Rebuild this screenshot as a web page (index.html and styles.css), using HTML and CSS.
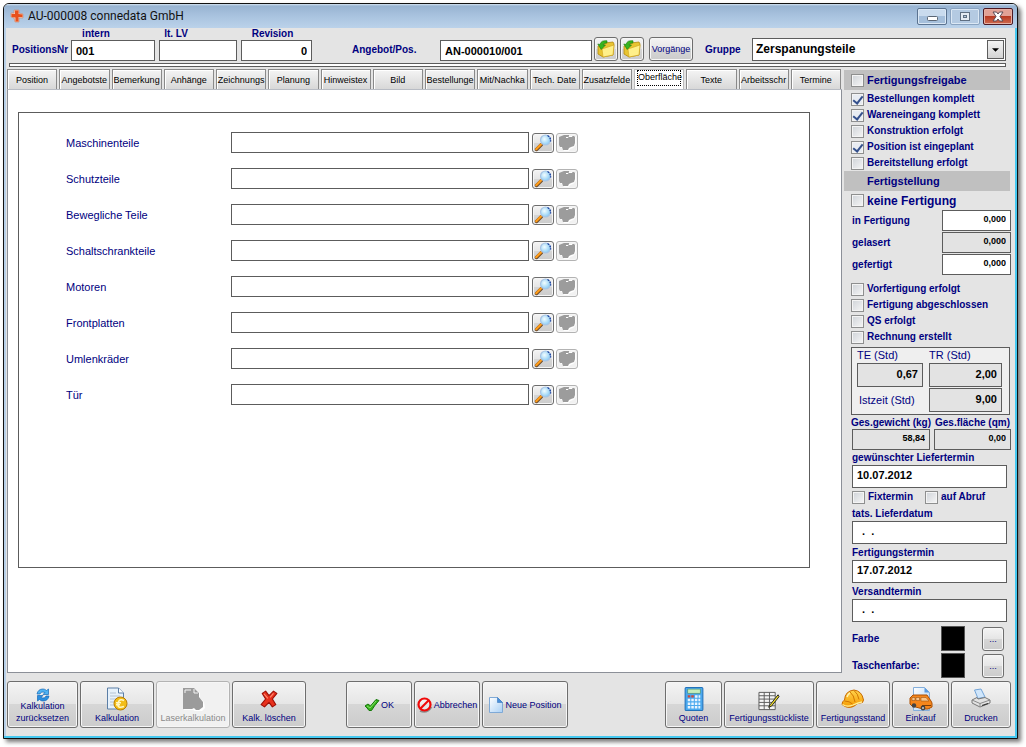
FILE: index.html
```html
<!DOCTYPE html>
<html lang="de">
<head>
<meta charset="utf-8">
<title>AU-000008 connedata GmbH</title>
<link rel="stylesheet" href="styles.css">
</head>
<body>
<svg class="defs" aria-hidden="true">
  <defs>
    <linearGradient id="g-page" x1="0" y1="0" x2="1" y2="1"><stop offset="0" stop-color="#ffffff"/><stop offset="1" stop-color="#a9d0f5"/></linearGradient>
    <linearGradient id="g-orange" x1="0" y1="0" x2="0" y2="1"><stop offset="0" stop-color="#ffd34d"/><stop offset="1" stop-color="#f59a00"/></linearGradient>
    <radialGradient id="g-lens" cx=".4" cy=".4" r=".6"><stop offset="0" stop-color="#f2fdff"/><stop offset="1" stop-color="#8ccdf5"/></radialGradient>
    <symbol id="i-lens" viewBox="0 0 18 18">
      <path d="M2.500 15.500l5-5" stroke="#6b4a2a" stroke-width="3.400" stroke-linecap="round"/>
      <path d="M2.200 15.200l4.800-4.800" stroke="#ff9c1a" stroke-width="2.200" stroke-linecap="round"/>
      <circle cx="11.500" cy="6" r="5" fill="url(#g-lens)" stroke="#a9c4e4" stroke-width="1.200"/>
      <path d="M13.500 1.500q3.600 2 3 6" fill="none" stroke="#123a9c" stroke-width="1.300" stroke-dasharray="2 1"/>
    </symbol>
    <symbol id="i-blob" viewBox="0 0 18 18">
      <path d="M2 4l7-1h9v8l-3 3-3 1-1 2H6l-2-3-2-1z" fill="#fff"/>
      <path d="M1 3l5-2h5v1h5l1 1v6l-1 3-3 1-2 1-1 2H5l-1-3H2L1 11z" fill="#9c9c9c"/>
      <path d="M8 3.500h2l1-1h3v-1" stroke="#fff" fill="none"/>
    </symbol>
    <symbol id="i-folder" viewBox="0 0 18 18">
      <path d="M1 6l6-1 1-2 8-1 1 2-1 11-10 2-5-3z" fill="#e8c431" stroke="#b58a0a" stroke-width=".8"/>
      <path d="M5 9l12-4-1 10-10 2z" fill="#fff08a" stroke="#d0a319" stroke-width=".6"/>
      <path d="M10 .8Q4 0 3 4.500L.8 4l3.400 5.500L8.500 5 6 5q.8-2.500 4-2z" fill="#37b51e" stroke="#187a0a" stroke-width=".6"/>
    </symbol>
    <symbol id="i-refresh" viewBox="0 0 14 14">
      <path d="M1 6Q2 1 7 1q2 0 3.500 1.500L12.500 1v5.500H7L9 4.500Q5 3 4 6z" fill="#4db2f2" stroke="#1668b8" stroke-width=".7"/>
      <path d="M13 8q-1 5-6 5-2 0-3.500-1.500L1.500 13V7.500H7l-2 2Q9 11 10 8z" fill="#2a8fe0" stroke="#1668b8" stroke-width=".7"/>
    </symbol>
    <symbol id="i-calc-doc" viewBox="0 0 22 24">
      <path d="M1.500 1h11l5 5v16h-16z" fill="#e6f1fb" stroke="#5b7ea6"/>
      <path d="M12.500 1v5h5" fill="#fff" stroke="#5b7ea6"/>
      <path d="M4 6h6M4 9h10M4 12h6M4 15h4M4 18h4" stroke="#b5c3d4"/>
      <circle cx="14.500" cy="16.500" r="6.500" fill="#f2bd18" stroke="#b97c00"/>
      <path d="M18 13.500q-5-2.500-6 3t6 3M10 15.800h5M10 17.800h4" fill="none" stroke="#fff7c2" stroke-width="1.500"/>
    </symbol>
    <symbol id="i-calc-gray" viewBox="0 0 22 24">
      <path d="M2 2h11l5 4v5l4 4 1 6-4 4-6-1-2-1H2z" fill="#fff"/>
      <path d="M1 1h11l5 5v4l4 5v5l-4 3h-3l-2-2-2 1H1z" fill="#9b9b9b"/>
      <path d="M3 3h6M12 2v4h4M3 3v3" fill="none" stroke="#f5f5f5"/>
    </symbol>
    <symbol id="i-x" viewBox="0 0 16 16">
      <path d="M2 3l3-2 3 4 4-4 3 2-4 5 3 5-3 2-3-4-4 4-3-2 4-5z" fill="#e8301c" stroke="#9c1006" stroke-linejoin="round"/>
      <path d="M3.500 3.500l3.500 4M12 3L9 6.500" stroke="#ff8a70"/>
    </symbol>
    <symbol id="i-check" viewBox="0 0 16 14">
      <path d="M1 8l3-2 2.500 2L12 1.500l3 1Q10 8 7.500 12.500H5Q3 9.500 1 8z" fill="#38b31c" stroke="#14780a" stroke-linejoin="round"/>
      <path d="M3 8l3 2 6-7" fill="none" stroke="#86e06c"/>
    </symbol>
    <symbol id="i-ban" viewBox="0 0 16 16">
      <path d="M3 14q7 3 11.500-4" fill="none" stroke="#8c8c8c" stroke-width="1.800"/>
      <circle cx="7.500" cy="7.500" r="6" fill="#fff" fill-opacity=".4" stroke="#f00a0a" stroke-width="2.200"/>
      <path d="M11.500 3.500l-8 8" stroke="#f00a0a" stroke-width="2.200"/>
    </symbol>
    <symbol id="i-page" viewBox="0 0 14 16">
      <path d="M.5.5h8l5 5v10H.5z" fill="url(#g-page)" stroke="#7fa9d6"/>
      <path d="M8.500.5v5h5z" fill="#4a90d9" stroke="#3a78bd" stroke-width=".6"/>
    </symbol>
    <symbol id="i-calculator" viewBox="0 0 18 23">
      <rect x=".5" y=".5" width="17" height="22" rx="1" fill="#4aa8ee" stroke="#2272ba"/>
      <rect x="3" y="2" width="12" height="4" fill="#c5eebc" stroke="#4b8f6b" stroke-width=".6"/>
      <path d="M3 9h6" stroke="#d04a3a" stroke-width="2.200" stroke-dasharray="2.400 1"/>
      <path d="M10 9h5M3 12.500h12M3 16h12M3 19.500h12" stroke="#eaf5ff" stroke-width="2.400" stroke-dasharray="2.400 1"/>
    </symbol>
    <symbol id="i-grid" viewBox="0 0 23 21">
      <path d="M1 1.500h17v18H1zM1 5h17M1 8.500h17M1 12h17M1 15.500h17M6.500 1.500v18M12 1.500v18" fill="#f4f4f4" stroke="#5b5b5b"/>
      <path d="M21 4l-8 10-2 3 3-1 8-10z" fill="#f3e12a" stroke="#222"/>
    </symbol>
    <symbol id="i-helmet" viewBox="0 0 24 20">
      <path d="M3.500 11Q4 2 13 1q8 1 9.500 10l-1 2.500q-5 0-9 4Q6 20 1 15.500q0-3 2.500-4.500z" fill="url(#g-orange)" stroke="#c96b00"/>
      <path d="M1.500 15.500Q6 18.500 12 16t9-3" fill="none" stroke="#fff09a" stroke-width="1.300"/>
      <path d="M3.500 12q5 0 8 3M9 3q4 3 5 10M13 1.500q4 3 5 9" fill="none" stroke="#d27600"/>
      <path d="M6 8q1-3 3-4" stroke="#fff2b0" stroke-width="1.500" fill="none"/>
    </symbol>
    <symbol id="i-van" viewBox="0 0 24 24">
      <path d="M4.500.5h11l5 5v18h-16z" fill="url(#g-page)" stroke="#84aedb"/>
      <path d="M15.500.5v5h5z" fill="#5b9be0"/>
      <path d="M1 11l3-3h14l4 6 1 2v4l-4 2h-5L3 19l-2-2z" fill="#f5861c" stroke="#ab5005"/>
      <path d="M3 10.500h3v3H3zM7 10.500h3.500v3H7zM12 10.500h5l3 3.500h-8z" fill="#f9c58b" stroke="#8a4a10" stroke-width=".5"/>
      <path d="M13 18.500h9" stroke="#7a3c08"/>
      <circle cx="5" cy="18.500" r="2.200" fill="#444"/><circle cx="14" cy="21" r="2.400" fill="#444"/><circle cx="14" cy="21" r="1" fill="#ccc"/>
    </symbol>
    <symbol id="i-printer" viewBox="0 0 20 19">
      <path d="M3.500 1.500l6.500-1L14 8.500l-7 1.500z" fill="#d0e6fb" stroke="#72a4d8"/>
      <path d="M1 11.500L6 9l1 1.500 7-1.500 5 2.500v3L9 18.500 1 14.500z" fill="#e2e2e2" stroke="#777"/>
      <path d="M1 11.500l8 3.500 10-3.500M9 15v3" fill="none" stroke="#8a8a8a"/>
      <path d="M11 17l6-2" stroke="#333" stroke-width="1.300"/>
    </symbol>
  </defs>
</svg>

<div class="window">
  <header class="titlebar">
    <svg class="logo" viewBox="0 0 14 14"><path d="M4 1h5v3l4 1v4H9v4H5l-1-4-3-1V4h3z" fill="#f3c5b2" stroke="#c98a70" stroke-width=".6"/><path d="M5 1.500h3.500V5l4 .5V8H8.500v4.500H5.500V8.500L1.500 8V5H5z" fill="#e8501c"/></svg>
    <h1 class="title">AU-000008 connedata GmbH</h1>
    <div class="caption-buttons">
      <button class="cap" aria-label="Minimieren"><svg viewBox="0 0 28 15"><rect x="9.500" y="7.500" width="10" height="4" rx="1" fill="#fff" stroke="#5a6675"/></svg></button>
      <button class="cap cap-dim" aria-label="Maximieren"><svg viewBox="0 0 28 15"><rect x="9.500" y="3.500" width="9" height="8" fill="#e4ebf3" stroke="#5f6f82"/><rect x="12.500" y="6.500" width="3" height="2" fill="#b5c8dd" stroke="#5f6f82"/></svg></button>
      <button class="cap cap-close" aria-label="Schließen"><svg viewBox="0 0 28 15"><path d="M9 3h3.500L14 5l1.500-2H19l-3 4.500 3 4.500h-3.500L14 10l-1.500 2H9l3-4.500z" fill="#fff" stroke="#5a4a55"/></svg></button>
    </div>
  </header>

  <div class="content">
    <section class="head">
      <label class="lbl head-lbl lbl-pos" for="posnr">PositionsNr</label>
      <div class="stack w-intern"><label class="lbl" for="posnr">intern</label><input id="posnr" class="field" value="001"></div>
      <div class="stack w-lv"><label class="lbl" for="lv">lt. LV</label><input id="lv" class="field"></div>
      <div class="stack w-rev"><label class="lbl" for="rev">Revision</label><input id="rev" class="field num" value="0"></div>
      <label class="lbl head-lbl lbl-offer" for="offer">Angebot/Pos.</label>
      <input id="offer" class="field w-offer" value="AN-000010/001">
      <div class="head-buttons">
        <button class="btn btn-folder" aria-label="Angebot öffnen"><svg class="s18"><use href="#i-folder"/></svg></button>
        <button class="btn btn-folder" aria-label="Position öffnen"><svg class="s18"><use href="#i-folder"/></svg></button>
        <button class="btn btn-cases">Vorgänge</button>
      </div>
      <label class="lbl head-lbl lbl-group" for="group">Gruppe</label>
      <div class="combo">
        <select id="group" class="select"><option>Zerspanungsteile</option></select>
        <span class="arrow"><svg viewBox="0 0 8 4"><path d="M0 0h8L4 4z"/></svg></span>
      </div>
    </section>
    <div class="rule"></div>

    <div class="main">
      <div class="work">
        <nav class="tabs">
          <button class="tab">Position</button><button class="tab">Angebotste</button><button class="tab">Bemerkung</button><button class="tab">Anhänge</button><button class="tab">Zeichnungs</button><button class="tab">Planung</button><button class="tab">Hinweistex</button><button class="tab">Bild</button><button class="tab">Bestellunge</button><button class="tab">Mit/Nachka</button><button class="tab">Tech. Date</button><button class="tab">Zusatzfelde</button><button class="tab active"><span>Oberfläche</span></button><button class="tab">Texte</button><button class="tab">Arbeitsschr</button><button class="tab">Termine</button>
        </nav>
        <div class="panel">
          <div class="frame">
            <div class="row"><label for="f1">Maschinenteile</label><input id="f1" class="field"><button class="btn mini" aria-label="Suchen"><svg class="s18"><use href="#i-lens"/></svg></button><button class="btn mini off" disabled aria-label="Entfernen"><svg class="s18"><use href="#i-blob"/></svg></button></div>
            <div class="row"><label for="f2">Schutzteile</label><input id="f2" class="field"><button class="btn mini" aria-label="Suchen"><svg class="s18"><use href="#i-lens"/></svg></button><button class="btn mini off" disabled aria-label="Entfernen"><svg class="s18"><use href="#i-blob"/></svg></button></div>
            <div class="row"><label for="f3">Bewegliche Teile</label><input id="f3" class="field"><button class="btn mini" aria-label="Suchen"><svg class="s18"><use href="#i-lens"/></svg></button><button class="btn mini off" disabled aria-label="Entfernen"><svg class="s18"><use href="#i-blob"/></svg></button></div>
            <div class="row"><label for="f4">Schaltschrankteile</label><input id="f4" class="field"><button class="btn mini" aria-label="Suchen"><svg class="s18"><use href="#i-lens"/></svg></button><button class="btn mini off" disabled aria-label="Entfernen"><svg class="s18"><use href="#i-blob"/></svg></button></div>
            <div class="row"><label for="f5">Motoren</label><input id="f5" class="field"><button class="btn mini" aria-label="Suchen"><svg class="s18"><use href="#i-lens"/></svg></button><button class="btn mini off" disabled aria-label="Entfernen"><svg class="s18"><use href="#i-blob"/></svg></button></div>
            <div class="row"><label for="f6">Frontplatten</label><input id="f6" class="field"><button class="btn mini" aria-label="Suchen"><svg class="s18"><use href="#i-lens"/></svg></button><button class="btn mini off" disabled aria-label="Entfernen"><svg class="s18"><use href="#i-blob"/></svg></button></div>
            <div class="row"><label for="f7">Umlenkräder</label><input id="f7" class="field"><button class="btn mini" aria-label="Suchen"><svg class="s18"><use href="#i-lens"/></svg></button><button class="btn mini off" disabled aria-label="Entfernen"><svg class="s18"><use href="#i-blob"/></svg></button></div>
            <div class="row"><label for="f8">Tür</label><input id="f8" class="field"><button class="btn mini" aria-label="Suchen"><svg class="s18"><use href="#i-lens"/></svg></button><button class="btn mini off" disabled aria-label="Entfernen"><svg class="s18"><use href="#i-blob"/></svg></button></div>
          </div>
        </div>
      </div>

      <aside class="side">
        <label class="check band"><input type="checkbox">Fertigungsfreigabe</label>
        <div class="checks">
          <label class="check"><input type="checkbox" checked>Bestellungen komplett</label>
          <label class="check"><input type="checkbox" checked>Wareneingang komplett</label>
          <label class="check"><input type="checkbox">Konstruktion erfolgt</label>
          <label class="check"><input type="checkbox" checked>Position ist eingeplant</label>
          <label class="check"><input type="checkbox">Bereitstellung erfolgt</label>
        </div>
        <h2 class="band band-text">Fertigstellung</h2>
        <label class="check big"><input type="checkbox">keine Fertigung</label>
        <div class="amounts">
          <label class="lbl" for="a1">in Fertigung</label><input id="a1" class="field num small" value="0,000">
          <label class="lbl" for="a2">gelasert</label><input id="a2" class="field num small ro" value="0,000" readonly>
          <label class="lbl" for="a3">gefertigt</label><input id="a3" class="field num small" value="0,000">
        </div>
        <div class="checks">
          <label class="check"><input type="checkbox">Vorfertigung erfolgt</label>
          <label class="check"><input type="checkbox">Fertigung abgeschlossen</label>
          <label class="check"><input type="checkbox">QS erfolgt</label>
          <label class="check"><input type="checkbox">Rechnung erstellt</label>
        </div>
        <div class="times">
          <label for="te">TE (Std)</label><label for="tr">TR (Std)</label>
          <input id="te" class="field num ro" value="0,67" readonly><input id="tr" class="field num ro" value="2,00" readonly>
          <label class="ist" for="ist">Istzeit (Std)</label><input id="ist" class="field num ro" value="9,00" readonly>
        </div>
        <div class="totals">
          <label class="lbl" for="kg">Ges.gewicht (kg)</label><label class="lbl" for="qm">Ges.fläche (qm)</label>
          <input id="kg" class="field num small ro" value="58,84" readonly><input id="qm" class="field num small ro" value="0,00" readonly>
        </div>
        <div class="date"><label class="lbl" for="d1">gewünschter Liefertermin</label><input id="d1" class="field" value="10.07.2012"></div>
        <div class="pair"><label class="check"><input type="checkbox">Fixtermin</label><label class="check"><input type="checkbox">auf Abruf</label></div>
        <div class="date"><label class="lbl" for="d2">tats. Lieferdatum</label><input id="d2" class="field blank" value=".  ."></div>
        <div class="date"><label class="lbl" for="d3">Fertigungstermin</label><input id="d3" class="field" value="17.07.2012"></div>
        <div class="date"><label class="lbl" for="d4">Versandtermin</label><input id="d4" class="field blank" value=".  ."></div>
        <div class="colors">
          <span class="lbl">Farbe</span><span class="swatch"></span><button class="btn dots" aria-label="Farbe wählen">...</button>
          <span class="lbl">Taschenfarbe:</span><span class="swatch"></span><button class="btn dots" aria-label="Taschenfarbe wählen">...</button>
        </div>
      </aside>
    </div>

    <footer class="bar">
      <div class="group">
        <button class="btn tool w71"><svg class="ic14"><use href="#i-refresh"/></svg>Kalkulation<br>zurücksetzen</button>
        <button class="btn tool w74"><svg class="ic24"><use href="#i-calc-doc"/></svg>Kalkulation</button>
        <button class="btn tool w74 off" disabled><svg class="ic24"><use href="#i-calc-gray"/></svg>Laserkalkulation</button>
        <button class="btn tool w74"><svg class="ic18"><use href="#i-x"/></svg>Kalk. löschen</button>
      </div>
      <div class="group">
        <button class="btn side-ic w66"><svg class="ic16"><use href="#i-check"/></svg>OK</button>
        <button class="btn side-ic w66"><svg class="ic16"><use href="#i-ban"/></svg>Abbrechen</button>
        <button class="btn side-ic w86"><svg class="ic16"><use href="#i-page"/></svg>Neue Position</button>
      </div>
      <div class="group last">
        <button class="btn tool w57"><svg class="ic24"><use href="#i-calculator"/></svg>Quoten</button>
        <button class="btn tool w90"><svg class="ic22"><use href="#i-grid"/></svg>Fertigungsstückliste</button>
        <button class="btn tool w74"><svg class="ic24"><use href="#i-helmet"/></svg>Fertigungsstand</button>
        <button class="btn tool w57"><svg class="ic24"><use href="#i-van"/></svg>Einkauf</button>
        <button class="btn tool w60"><svg class="ic20"><use href="#i-printer"/></svg>Drucken</button>
      </div>
    </footer>
  </div>
</div>
</body>
</html>
```
FILE: styles.css
```css
* { box-sizing: border-box; }

body {
  margin: 0;
  min-height: 100vh;
  display: flex;
  padding: 3px 8px 8px 3px;
  background: #fff;
  color: #000080;
  font: 11px/14px "Liberation Sans", Arial, sans-serif;
}

button, input, select { font-family: inherit; margin: 0; }

.defs { position: absolute; width: 0; height: 0; }

.window {
  flex: 1;
  display: flex;
  flex-direction: column;
  border: 1px solid #111;
  border-radius: 6px 6px 0 0;
  overflow: hidden;
  background: #e4e4e4;
  box-shadow: 3px 3px 4px #777, inset -2px -2px 0 #45c8f0, inset 2px 0 0 #b8d0e8;
}

.titlebar {
  display: flex;
  align-items: center;
  height: 24px;
  padding: 0 4px 0 6px;
  background: linear-gradient(#d5e3f2 0, #98b4d2 2px, #a9c3df 12px, #bbd2ea 24px);
}
.logo { width: 14px; height: 14px; margin-right: 4px; }
.title { flex: 1; margin: 0; color: #111; font: 12px/20px Roboto, "Noto Sans", sans-serif; }
.caption-buttons { display: flex; gap: 3px; }
.cap {
  width: 30px; height: 17px; padding: 0;
  border: 1px solid #5b7390; border-radius: 2px;
  background: linear-gradient(#c9dbee 50%, #a5bfdb 50%);
  box-shadow: inset 0 0 0 1px #dbe8f5;
}
.cap svg { display: block; width: 28px; height: 15px; }
.cap-dim { border-color: #8aa3c0; background: #b4cae2; }
.cap-close { border-color: #4d1a24; background: linear-gradient(#e2a195 50%, #b83a22 50%, #cf6b50); box-shadow: inset 0 0 0 1px #e6b0a4; }

.content { flex: 1; display: flex; flex-direction: column; padding: 0 6px 10px 3px; }

.lbl { color: #000080; font-weight: bold; font-size: 10px; line-height: 12px; white-space: nowrap; }

.field {
  width: 100%; min-width: 0; height: 21px; padding: 0 4px;
  border: 1px solid #5c5c5c; border-radius: 0; outline: 0;
  background: #fff; color: #000; font-weight: bold; font-size: 11px;
}
.num { text-align: right; }
.ro { background: #e3e3e3; }
.small { font-size: 9px; padding-bottom: 3px; }

.btn {
  display: flex; align-items: center; justify-content: center;
  padding: 0; border: 1px solid #6e6e6e; border-radius: 3px;
  background: linear-gradient(#f4f4f4, #e6e6e6 48%, #d6d6d6 50%, #cccccc);
  box-shadow: inset 0 0 0 1px #f6f6f6;
  color: #000080; font-size: 9px; line-height: 12px; white-space: nowrap;
}
.btn svg { flex: none; }
.off { border-color: #b3b3b3; background: #f1f1f1; color: #8a8a8a; }
.s18 { width: 18px; height: 18px; }

.head { display: flex; align-items: flex-end; height: 33px; padding: 0 5px 0 5px; }
.head-lbl { height: 17px; }
.lbl-pos { width: 59px; }
.lbl-offer { width: 88px; margin-left: 40px; }
.lbl-group { width: 47px; margin-left: 12px; }
.stack { display: flex; flex-direction: column; align-items: center; margin-right: 4px; }
.stack.w-intern .lbl { padding-right: 34px; }
.stack.w-lv .lbl { padding-right: 44px; }
.stack.w-rev .lbl { padding-right: 8px; }
.w-intern { width: 84px; }
.w-lv { width: 78px; }
.w-rev { width: 71px; margin-right: 0; }
.w-offer { width: 152px; flex: none; }
.head-buttons { display: flex; gap: 2px; margin-left: 2px; }
.btn-folder { width: 24px; height: 24px; }
.btn-cases { width: 44px; height: 24px; margin-left: 3px; }
.combo { flex: 1; display: grid; height: 23px; border: 1px solid #5c5c5c; background: #fff; }
.combo > * { grid-area: 1 / 1; }
.select { appearance: none; width: 100%; border: 0; padding: 0 20px 2px 3px; background: transparent; color: #000; font-weight: bold; font-size: 12px; }
.arrow {
  justify-self: end; display: flex; align-items: center; justify-content: center;
  width: 17px; margin: 1px; border: 1px solid #5c5c5c; background: linear-gradient(#f3f3f3, #d4d4d4); pointer-events: none;
}
.arrow svg { width: 7px; height: 4px; }

.rule { height: 4px; margin: 2px 5px 0 2px; border: 1px solid #5c5c5c; background: #fff; }

.main { flex: 1; display: flex; gap: 2px; padding-top: 2px; }
.work { flex: 1; min-width: 0; display: flex; flex-direction: column; margin-bottom: 7px; }
.tabs { display: flex; gap: 2px; height: 20px; padding-right: 1px; }
.tab {
  flex: 1 1 0; min-width: 0; overflow: hidden; padding: 0; white-space: nowrap;
  border: 1px solid #8a8a8a; border-bottom: 0;
  background: linear-gradient(#f4f4f4, #e6e6e6 50%, #d8d8d8);
  box-shadow: inset 1px 1px 0 #fff;
  color: #000; font-size: 9px; line-height: 18px;
}
.active { background: #fff; border-color: #bbb; }
.active span { display: block; height: 14px; margin: 0 3px 4px; line-height: 13px; outline: 1px dotted #000; }
.panel { flex: 1; padding: 22px 31px 104px 10px; border: 1px solid #8c9098; border-top-color: #b8bcc4; background: #fff; }
.frame { height: 100%; padding: 19px 0 0 47px; border: 1px solid #5c5c5c; display: flex; flex-direction: column; gap: 15px; }
.row { display: grid; grid-template-columns: 162px 298px 22px 22px; column-gap: 3px; align-items: center; }
.row .btn + .btn { margin-left: -1px; }
.mini { width: 22px; height: 20px; }

.side { width: 167px; display: flex; flex-direction: column; }
.band { width: 166px; height: 20px; margin: 1px 0 0; background: #c0c0c0; font-size: 11px; }
.check { display: flex; align-items: center; gap: 3px; padding-left: 7px; height: 16px; color: #000080; font-weight: bold; font-size: 10px; white-space: nowrap; }
.check.band { height: 20px; font-size: 11px; }
.check.big { height: 19px; font-size: 12px; }
.check input {
  appearance: none; flex: none; width: 13px; height: 13px;
  border: 1px solid #8e8f8f;
  background: linear-gradient(135deg, #cfd3d8, #f6f6f6);
  box-shadow: inset 0 0 0 1px #f4f4f4;
}
.check input:checked { display: grid; place-items: center; background: #e8ecf2; }
.check input:checked::before { content: ""; width: 4px; height: 8px; margin-bottom: 2px; border: solid #34508c; border-width: 0 2px 2px 0; transform: rotate(38deg); }
.checks { padding-top: 1px; }
.band-text { margin: 0; padding-left: 23px; line-height: 20px; font-weight: bold; }
.amounts { display: grid; grid-template-columns: 1fr 69px; row-gap: 1px; padding-left: 8px; align-items: center; margin-bottom: 5px; }
.times {
  display: grid; grid-template-columns: 66px 73px; column-gap: 6px; row-gap: 1px; align-items: center;
  width: 159px; margin: 2px 0 0 7px; padding: 1px 5px 2px; border: 1px solid #5c5c5c; background: #efefef;
}
.times label { line-height: 13px; }
.times .field { height: 24px; padding-bottom: 3px; }
.ist { padding-left: 2px; }
.totals { display: grid; grid-template-columns: 78px 77px; column-gap: 4px; padding: 1px 0 0 8px; }
.totals .lbl { line-height: 13px; justify-self: center; margin: 0 -6px; }
.date { display: flex; flex-direction: column; width: 163px; padding: 1px 0 0 8px; margin-bottom: 1px; }
.date .lbl { line-height: 14px; }
.date .field { height: 23px; padding-bottom: 3px; }
.date .blank { padding-left: 9px; white-space: pre; }
.pair { display: flex; padding-left: 1px; height: 17px; }
.pair .check + .check { margin-left: 5px; }
.colors { display: grid; grid-template-columns: 89px 41px 22px; row-gap: 2px; padding: 3px 0 0 8px; align-items: center; }
.swatch { width: 24px; height: 25px; border: 1px solid #555; background: #000; }
.dots { width: 22px; height: 24px; }

.bar { display: flex; padding-top: 1px; }
.group { display: flex; gap: 2px; }
.group + .group { margin-left: 40px; }
.group.last { margin-left: auto; }
.bar .btn { height: 47px; }
.tool { flex-direction: column; justify-content: flex-end; padding-bottom: 3px; }
.side-ic { gap: 1px; }
.ic14 { width: 14px; height: 14px; margin-bottom: -2px; }
.ic16 { width: 16px; height: 16px; }
.ic18 { width: 18px; height: 18px; margin-bottom: 4px; }
.ic20 { width: 20px; height: 20px; margin-bottom: 4px; }
.ic22 { width: 22px; height: 22px; }
.ic24 { width: 24px; height: 24px; margin-bottom: 1px; }
.w57 { width: 57px; }
.w60 { width: 60px; }
.w66 { width: 66px; }
.w71 { width: 71px; }
.w74 { width: 74px; }
.w86 { width: 86px; }
.w90 { width: 90px; }
```
